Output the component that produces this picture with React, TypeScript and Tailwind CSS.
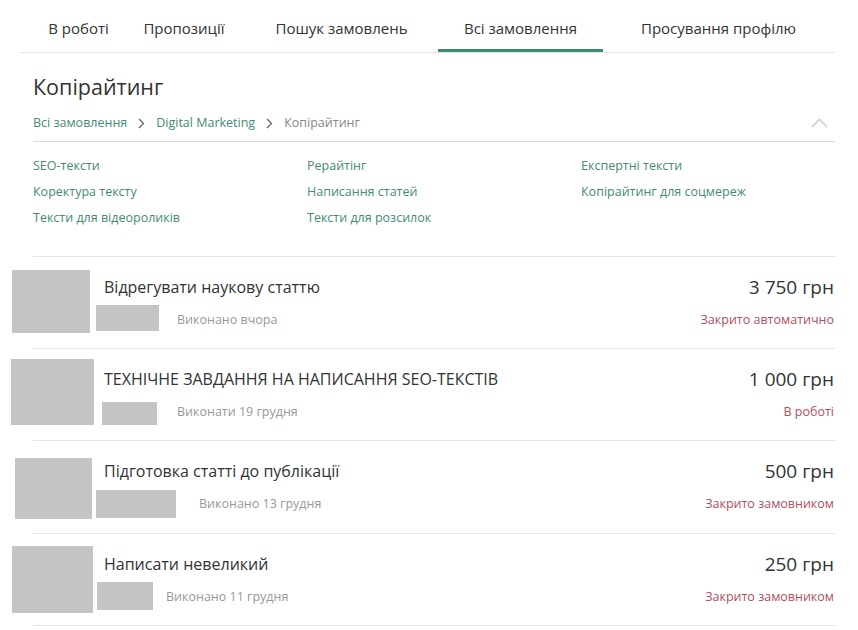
import React from "react";

const tabs = [
  { label: "В роботі", cls: "w-[117px]" },
  { label: "Пропозиції", cls: "w-[94px]" },
  { label: "Пошук замовлень", cls: "ml-[14px] w-[193px]" },
  { label: "Всі замовлення", cls: "w-[165px]", active: true },
  { label: "Просування профілю", cls: "w-[231px]" },
];

const categories = [
  "SEO-тексти",
  "Рерайтінг",
  "Експертні тексти",
  "Коректура тексту",
  "Написання статей",
  "Копірайтинг для соцмереж",
  "Тексти для відеороликів",
  "Тексти для розсилок",
];

type Order = {
  title: string;
  price: string;
  status: string;
  due: string;
  avatar: string;
  chip: string;
  dueCls: string;
  rowCls: string;
};

const orders: Order[] = [
  {
    title: "Відрегувати наукову статтю",
    price: "3 750 грн",
    status: "Закрито автоматично",
    due: "Виконано вчора",
    avatar: "ml-[12px] mt-[13px] h-[63px] w-[78px]",
    chip: "mt-[7px] h-[26px] w-[63px]",
    dueCls: "ml-[18px]",
    rowCls: "h-[91px]",
  },
  {
    title: "ТЕХНІЧНЕ ЗАВДАННЯ НА НАПИСАННЯ SEO-ТЕКСТІВ",
    price: "1 000 грн",
    status: "В роботі",
    due: "Виконати 19 грудня",
    avatar: "ml-[11px] mt-[10px] h-[66px] w-[83px]",
    chip: "ml-[6px] mt-[12px] h-[23px] w-[55px]",
    dueCls: "ml-[20px]",
    rowCls: "h-[91px]",
  },
  {
    title: "Підготовка статті до публікації",
    price: "500 грн",
    status: "Закрито замовником",
    due: "Виконано 13 грудня",
    avatar: "ml-[15px] mt-[17px] h-[61px] w-[77px]",
    chip: "mt-[8px] h-[28px] w-[80px]",
    dueCls: "ml-[23px]",
    rowCls: "h-[92px]",
  },
  {
    title: "Написати невеликий",
    price: "250 грн",
    status: "Закрито замовником",
    due: "Виконано 11 грудня",
    avatar: "ml-[12px] mt-[12px] h-[67px] w-[81px]",
    chip: "ml-[1px] mt-[7px] h-[28px] w-[56px]",
    dueCls: "ml-[13px]",
    rowCls: "h-[91px]",
  },
];

function Chevron() {
  return (
    <svg width="7" height="11" viewBox="0 0 7 11" className="mx-[11px] shrink-0">
      <path d="M1 1l4.5 4.5L1 10" fill="none" stroke="#666" strokeWidth="1.3" />
    </svg>
  );
}

function OrderRow({ o }: { o: Order }) {
  return (
    <div className={`flex ${o.rowCls}`}>
      <div className="w-[96px] shrink-0">
        <div className={`bg-[#c4c4c4] ${o.avatar}`} />
      </div>
      <div className="flex-1 pt-[19px]">
        <div className="pl-[8px] text-[16px] leading-[22px] text-[#333]">{o.title}</div>
        <div className="flex items-start">
          <div className={`shrink-0 bg-[#c4c4c4] ${o.chip}`} />
          <div className={`mt-[12px] text-[12.5px] leading-[20px] text-[#999] ${o.dueCls}`}>{o.due}</div>
        </div>
      </div>
      <div className="mr-[24px] pt-[19px] text-right">
        <div className="text-[19px] leading-[22px] text-[#333]">{o.price}</div>
        <div className="mt-[12px] text-[12.5px] leading-[20px] text-[#b0505e]">{o.status}</div>
      </div>
    </div>
  );
}

export default function App() {
  return (
    <div className="min-h-[630px] w-[858px] bg-white font-['Open_Sans',sans-serif]">
      <nav className="ml-[20px] mr-[23px] flex h-[53px] border-b border-[#e3e3e3]">
        {tabs.map((t) => (
          <div
            key={t.label}
            className={`flex items-center justify-center text-[15px] text-[#333] ${t.cls} ${
              t.active ? "border-b-[3px] border-[#3b8a72] pt-[7px]" : "pt-[4px]"
            }`}
          >
            {t.label}
          </div>
        ))}
      </nav>

      <section className="ml-[33px] mr-[23px]">
        <h1 className="mt-[19px] text-[21.5px] leading-[30px] text-[#333]">Копірайтинг</h1>
        <div className="mt-[11px] flex items-center border-b border-[#dcdcdc] pb-[8px] text-[12.5px] leading-[20px]">
          <span className="text-[#468a76]">Всі замовлення</span>
          <Chevron />
          <span className="text-[#468a76]">Digital Marketing</span>
          <Chevron />
          <span className="text-[#888]">Копірайтинг</span>
          <svg width="17" height="10" viewBox="0 0 17 10" className="ml-auto mr-[7px]">
            <path d="M1 9l7.5-7.5L16 9" fill="none" stroke="#cfcfcf" strokeWidth="1.6" />
          </svg>
        </div>
        <div className="grid grid-cols-[274px_274px_1fr] gap-y-[6px] border-b border-[#e3e3e3] pb-[28px] pt-[14px] text-[12.5px] leading-[20px] text-[#468a76]">
          {categories.map((c) => (
            <span key={c}>{c}</span>
          ))}
        </div>
      </section>

      {orders.map((o) => (
        <div key={o.title}>
          <OrderRow o={o} />
          <div className="ml-[33px] mr-[23px] h-px bg-[#e3e3e3]" />
        </div>
      ))}
    </div>
  );
}
